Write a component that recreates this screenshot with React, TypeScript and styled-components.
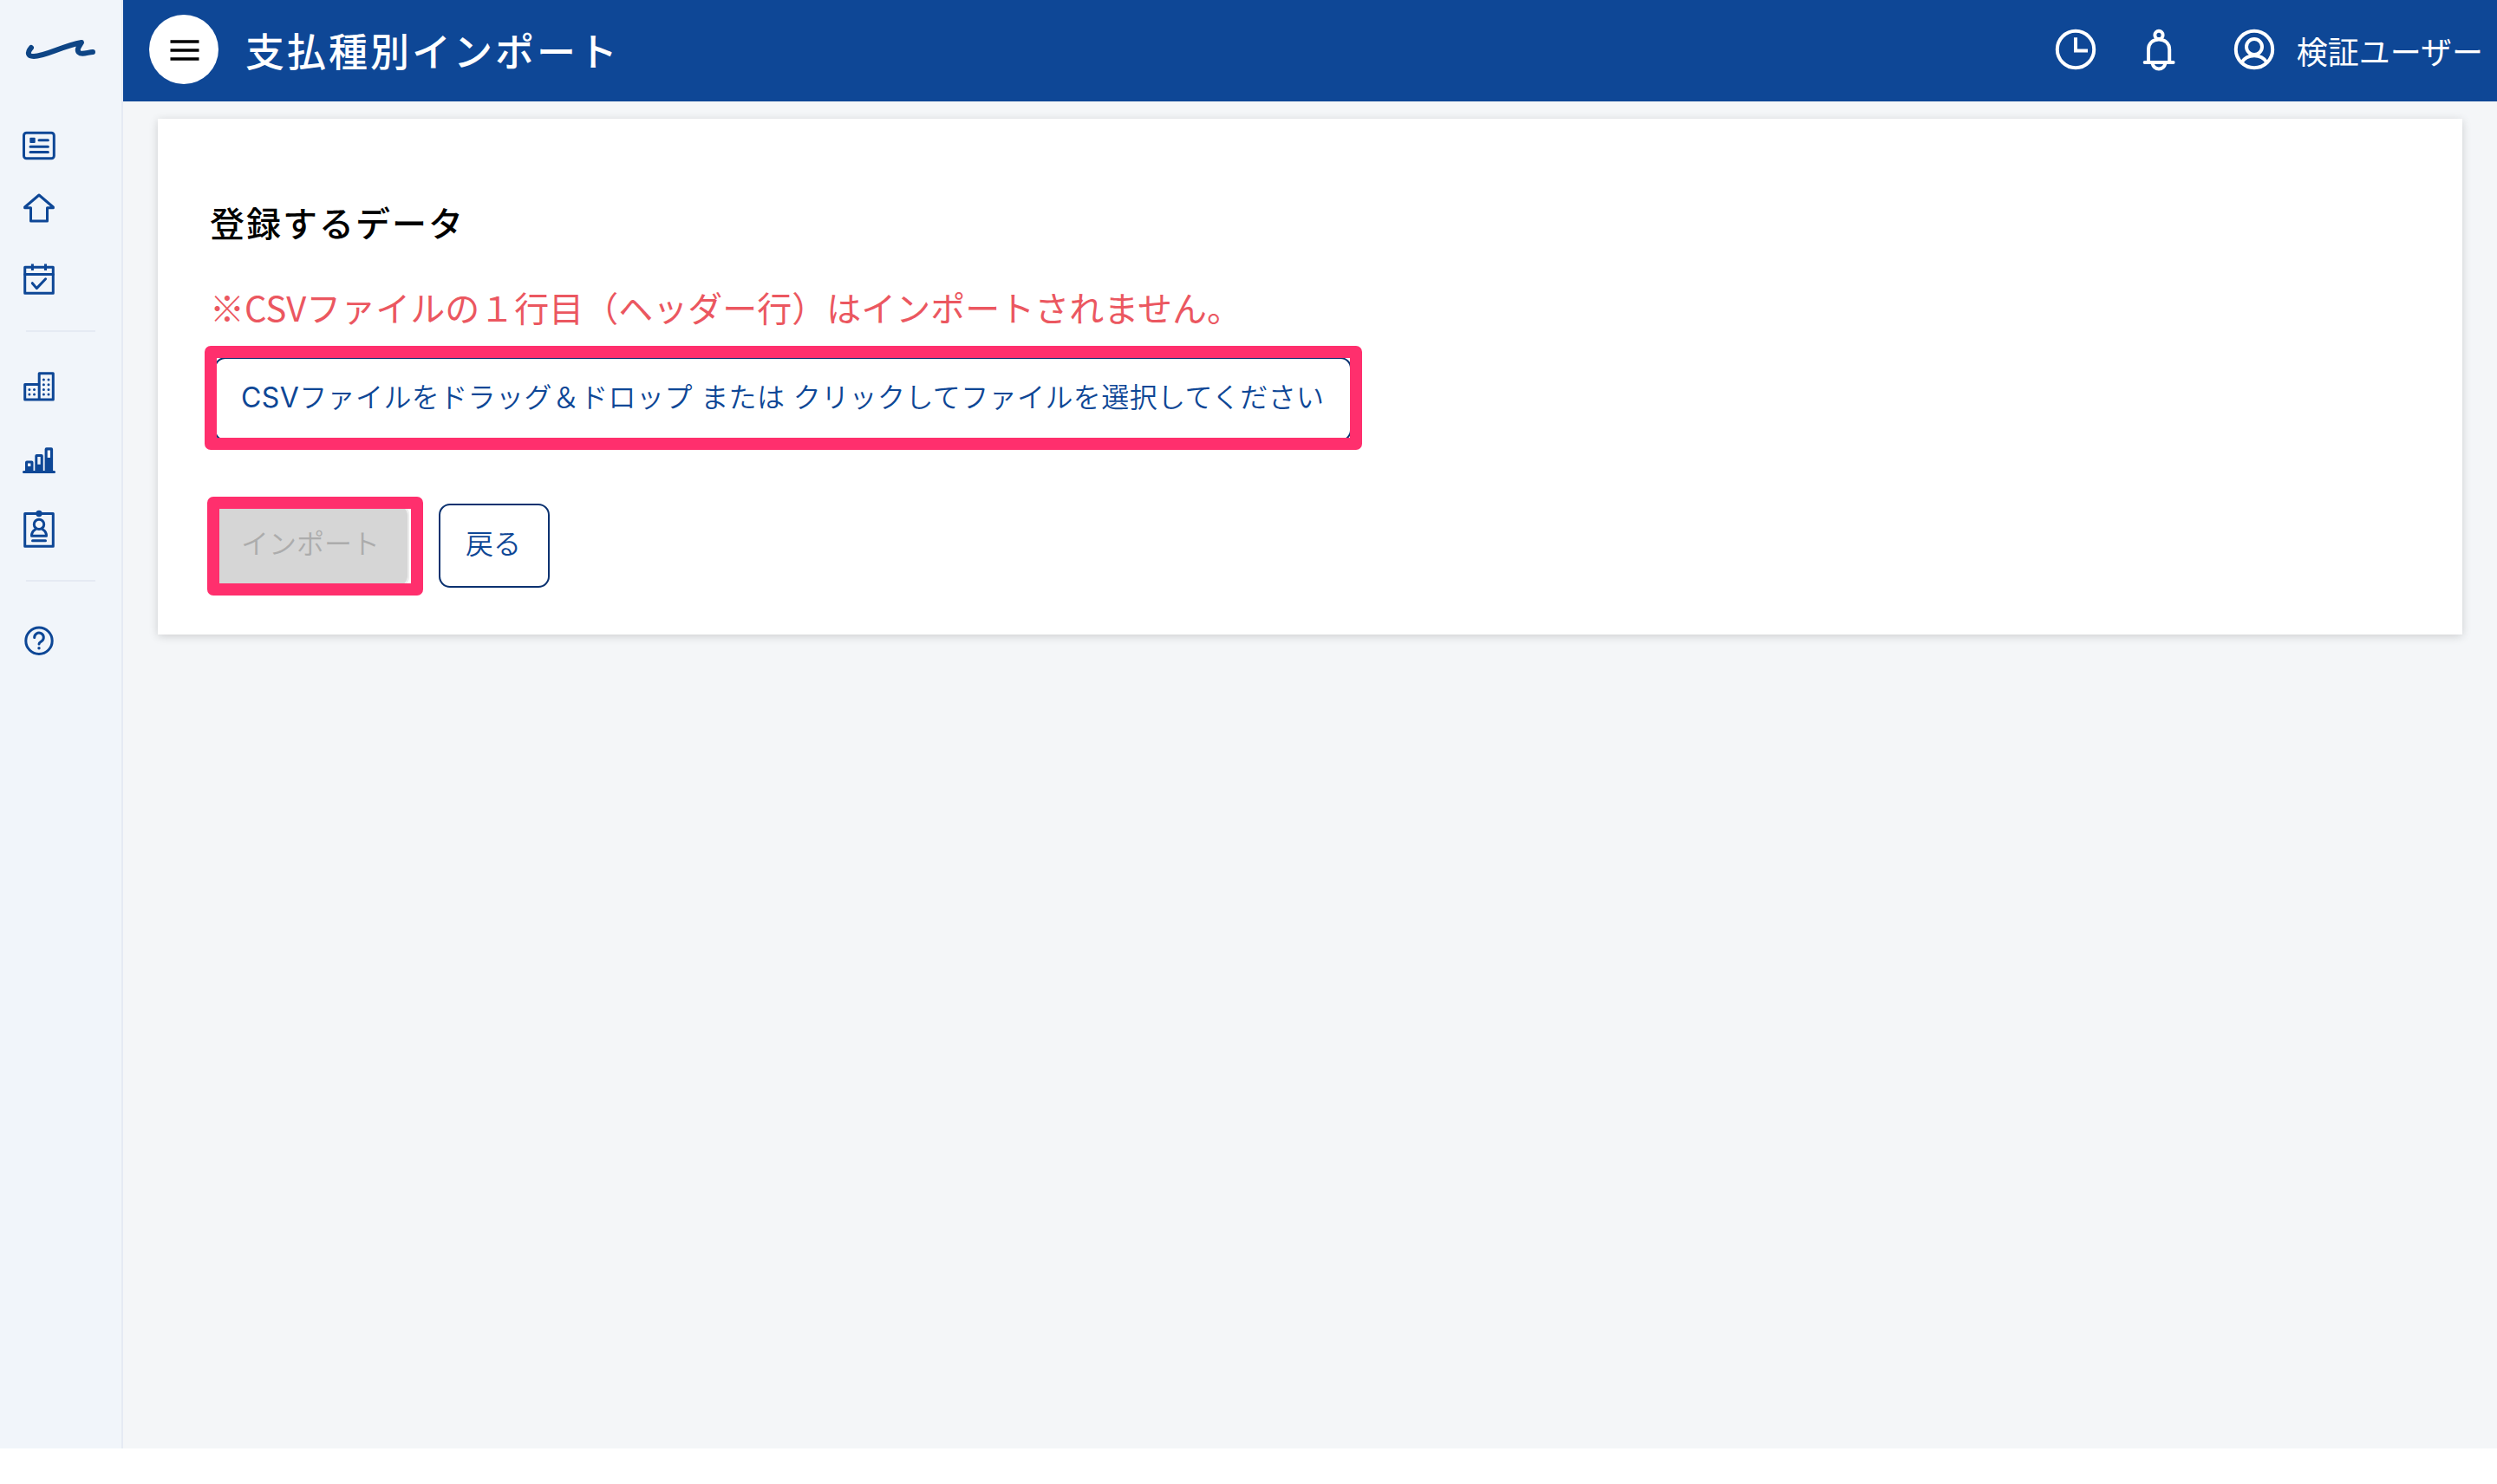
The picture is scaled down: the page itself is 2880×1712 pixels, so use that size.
import React from "react";
import styled, { createGlobalStyle } from "styled-components";

const navy = "#0e4796";
const pink = "#ff2f6d";

const GlobalStyle = createGlobalStyle`
  * { box-sizing: border-box; }
  body {
    margin: 0;
    background: #fff;
    font-family: "Noto Sans CJK JP", sans-serif;
  }
`;

const Shell = styled.div`
  display: flex;
  width: 2880px;
  height: 1671px;
  background: #f4f6f8;
`;

const Sidebar = styled.nav`
  display: flex;
  flex-direction: column;
  flex: none;
  width: 142px;
  background: #f1f5fa;
  border-right: 2px solid #e5eaf3;
  padding-left: 26px;
`;

const Glyph = styled.svg<{ $gap?: number }>`
  display: block;
  flex: none;
  margin-top: ${(p) => p.$gap ?? 0}px;
  overflow: visible;
`;

const Divider = styled.hr<{ $gap: number }>`
  width: 80px;
  height: 2px;
  border: 0;
  background: #e5eaf3;
  margin: ${(p) => p.$gap}px 0 0 4px;
`;

const Main = styled.main`
  flex: 1;
  display: flex;
  flex-direction: column;
  min-width: 0;
`;

const Header = styled.header`
  display: flex;
  align-items: center;
  height: 117px;
  flex: none;
  background: ${navy};
  color: #fff;
  padding: 0 16px 3px 30px;
`;

const MenuButton = styled.button`
  display: flex;
  align-items: center;
  justify-content: center;
  width: 80px;
  height: 80px;
  padding: 2px 0 0 2px;
  border: 0;
  border-radius: 50%;
  background: #fff;
`;

const PageTitle = styled.h1`
  margin: 2px auto 0 31px;
  font-size: 45px;
  font-weight: 500;
  line-height: 60px;
  letter-spacing: 3px;
`;

const HeaderIcons = styled.div`
  display: flex;
  align-items: center;
`;

const HeaderGlyph = styled(Glyph)<{ $left?: number }>`
  margin-left: ${(p) => p.$left ?? 0}px;
`;

const UserName = styled.span`
  margin: 1px 0 0 26px;
  font-size: 36px;
  line-height: 48px;
  font-weight: 400;
`;

const Card = styled.section`
  margin: 20px 40px 0;
  height: 595px;
  padding: 89px 60px 0;
  background: #fff;
  box-shadow: 0 2px 10px rgba(0, 0, 0, 0.16);
`;

const Heading = styled.h2`
  margin: 0;
  font-size: 40px;
  font-weight: 500;
  line-height: 60px;
  letter-spacing: 2px;
  color: #000;
`;

const Note = styled.p`
  margin: 38px 0 0;
  font-size: 40px;
  line-height: 60px;
  color: #eb5760;
`;

const Actions = styled.div<{ $gap: number }>`
  display: flex;
  gap: 34px;
  margin: ${(p) => p.$gap}px 0 0 5px;
`;

const Marked = styled.div<{ $inset: string }>`
  position: relative;
  display: flex;
  &::after {
    content: "";
    position: absolute;
    inset: ${(p) => p.$inset};
    border: 14px solid ${pink};
    border-radius: 7px;
    pointer-events: none;
  }
`;

const Button = styled.button<{ $width: number; $tracking?: number }>`
  width: ${(p) => p.$width}px;
  height: 97px;
  padding: 0 0 3px 29px;
  border: 2px solid #0b3270;
  border-radius: 13px;
  background: #fff;
  color: ${navy};
  font-family: Inter, "Noto Sans CJK JP", sans-serif;
  font-size: 32px;
  font-weight: 350;
  line-height: 48px;
  letter-spacing: ${(p) => p.$tracking ?? 0}px;
  text-align: left;
  white-space: nowrap;
  &:disabled {
    background: #d6d6d6;
    background-clip: padding-box;
    border-color: #ececec;
    color: #acacac;
  }
`;

const FileType = styled.span`
  font-weight: 400;
`;

const line = { fill: "none", stroke: navy, strokeWidth: 3, strokeLinecap: "round", strokeLinejoin: "round" } as const;
const whiteLine = { ...line, stroke: "#fff", strokeWidth: 4 } as const;

const Logo = () => (
  <Glyph $gap={44} width="86" height="26" viewBox="26 44 86 26" {...line} stroke="#0e4585" strokeWidth={6}>
    <path d="M36 55C31 61 32 65 39 65C52 65 72 53 94 49C91 54 88 57 91 60.500C94 63.500 101 60.500 107 60" />
  </Glyph>
);
const NewsIcon = () => (
  <Glyph $gap={81} width="38" height="34" viewBox="26 151 38 34" {...line}>
    <rect x="27.500" y="153.200" width="34.800" height="29.600" rx="3" />
    <rect x="34.300" y="158.800" width="6.400" height="6.200" rx="1" fill={navy} stroke="none" />
    <path d="M45 161.800H55.400M35 169.300H55.400M35 175.500H55.400" />
  </Glyph>
);
const HomeIcon = () => (
  <Glyph $gap={38} width="38" height="34" viewBox="26 223 38 34" {...line}>
    <path d="M45 225L28.600 239V239.800H35.500V255H54.500V239.800H61.400V239Z" />
  </Glyph>
);
const CalendarIcon = () => (
  <Glyph $gap={47} width="38" height="36" viewBox="26 304 38 36" {...line}>
    <rect x="28.700" y="308.300" width="32.600" height="30" />
    <path d="M28.700 316.400H61.300" />
    <path d="M37.400 304.500V312M52.500 304.500V312" strokeLinecap="butt" />
    <path d="M37.300 326.700L42.300 332.600L52.600 321.800" />
  </Glyph>
);
const BuildingIcon = () => (
  <Glyph $gap={46} width="38" height="34" viewBox="26 429 38 34" {...line}>
    <path d="M45.200 430.800H61.300V461H28.700V443.600H45.200ZM45.200 443V461" />
    <path d="M33.900 449.400h.01M39.500 449.400h.01M33.900 455h.01M39.500 455h.01M50.400 438.100h.01M56 438.100h.01M50.400 443.700h.01M56 443.700h.01M50.400 449.400h.01M56 449.400h.01M50.400 455h.01M56 455h.01" />
  </Glyph>
);
const ChartIcon = () => (
  <Glyph $gap={53} width="38" height="30" viewBox="26 516 38 30" fill={navy}>
    <path
      fillRule="evenodd"
      d="M29 544V533.500a2 2 0 0 1 2-2h5.500a2 2 0 0 1 2 2V544ZM32 534.500V538H35.400V534.500ZM40.300 544V526a2 2 0 0 1 2-2h5.500a2 2 0 0 1 2 2V544ZM43.300 527V535.700H46.700V527ZM51.600 544V518.300a2 2 0 0 1 2-2h5.500a2 2 0 0 1 2 2V544ZM54.700 519.400V528H58V519.400Z"
    />
    <rect x="26" y="542.900" width="38" height="3" rx="1.500" />
  </Glyph>
);
const BadgeIcon = () => (
  <Glyph $gap={43} width="38" height="44" viewBox="26 589 38 44" {...line}>
    <rect x="28.700" y="592.400" width="32.600" height="37.800" />
    <circle cx="45" cy="592.500" r="3.700" fill={navy} stroke="none" />
    <circle cx="45" cy="604.900" r="5.700" />
    <path d="M40.500 611C38 612.500 36.500 615 36.500 618.200H53.500C53.500 615 52 612.500 49.500 611" />
    <path d="M37.500 623.700H52.500" />
  </Glyph>
);
const HelpIcon = () => (
  <Glyph $gap={51} width="38" height="34" viewBox="26 722 38 34" {...line}>
    <circle cx="45" cy="739.300" r="15.200" />
    <path d="M39.700 735.600a5.300 5.300 0 1 1 8.300 4.100C46 741.100 45 741.300 45 743" />
    <circle cx="45" cy="747.700" r="1.700" fill={navy} stroke="none" />
  </Glyph>
);

const MenuIcon = () => (
  <Glyph width="34" height="24" viewBox="196 46 34 24" stroke="#000" strokeWidth={3.4}>
    <path d="M196.500 48H229.500M196.500 58H229.500M196.500 68H229.500" />
  </Glyph>
);
const ClockIcon = () => (
  <HeaderGlyph width="46" height="48" viewBox="2371 33 46 48" {...whiteLine}>
    <circle cx="2394" cy="57" r="21.200" />
    <path d="M2394 43.300V58.400H2408" strokeLinecap="butt" strokeLinejoin="miter" />
  </HeaderGlyph>
);
const BellIcon = () => (
  <HeaderGlyph $left={54} width="38" height="48" viewBox="2471 33 38 48" {...whiteLine}>
    <circle cx="2490" cy="40.400" r="4.600" />
    <path d="M2478 71V57C2478 50 2483 45.500 2490 45.500S2502.200 50 2502.200 57V71" />
    <path d="M2473.700 72H2506.600" />
    <path d="M2482.500 73C2483.500 77 2486 79.400 2490 79.400S2496.500 77 2497.500 73" />
  </HeaderGlyph>
);
const UserIcon = () => (
  <HeaderGlyph $left={68} width="46" height="48" viewBox="2577 33 46 48" {...whiteLine}>
    <circle cx="2600" cy="57" r="21.200" />
    <circle cx="2600" cy="54" r="9" />
    <path d="M2585.500 72C2588.500 67 2593.500 64.200 2600 64.200S2611.500 67 2614.500 72" />
  </HeaderGlyph>
);

export default function App() {
  return (
    <>
      <GlobalStyle />
      <Shell>
        <Sidebar>
          <Logo />
          <NewsIcon />
          <HomeIcon />
          <CalendarIcon />
          <Divider $gap={41} />
          <BuildingIcon />
          <ChartIcon />
          <BadgeIcon />
          <Divider $gap={36} />
          <HelpIcon />
        </Sidebar>
        <Main>
          <Header>
            <MenuButton aria-label="menu">
              <MenuIcon />
            </MenuButton>
            <PageTitle>支払種別インポート</PageTitle>
            <HeaderIcons>
              <ClockIcon />
              <BellIcon />
              <UserIcon />
            </HeaderIcons>
            <UserName>検証ユーザー</UserName>
          </Header>
          <Card>
            <Heading>登録するデータ</Heading>
            <Note>※CSVファイルの１行目（ヘッダー行）はインポートされません。</Note>
            <Actions $gap={28}>
              <Marked $inset="-13px -12px -10px -11px">
                <Button $width={1312} $tracking={0.4}>
                  <FileType>CSV</FileType>ファイルをドラッグ＆ドロップ または クリックしてファイルを選択してください
                </Button>
              </Marked>
            </Actions>
            <Actions $gap={72}>
              <Marked $inset="-8px -16px -9px -8px">
                <Button $width={225} disabled>
                  インポート
                </Button>
              </Marked>
              <Button $width={128}>戻る</Button>
            </Actions>
          </Card>
        </Main>
      </Shell>
    </>
  );
}
